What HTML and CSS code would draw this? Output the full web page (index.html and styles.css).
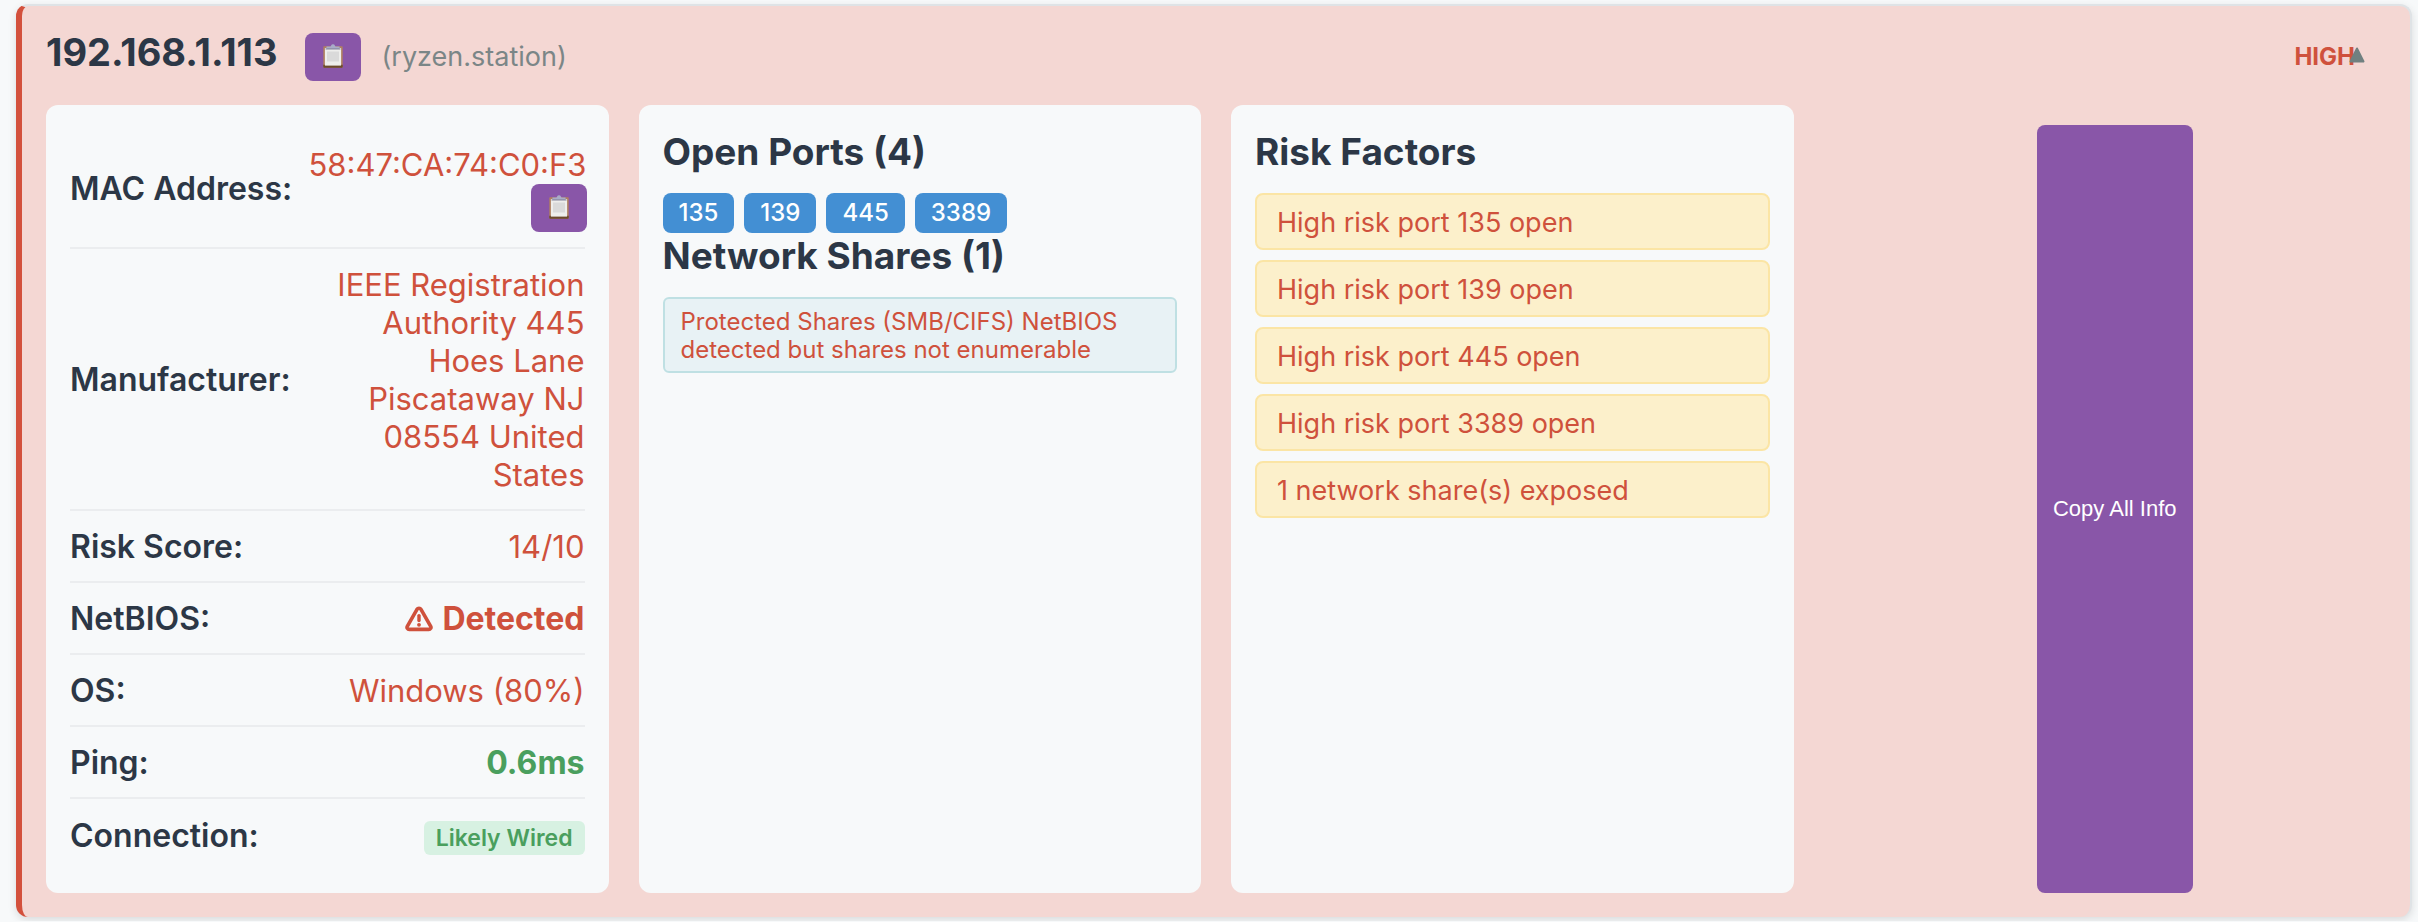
FILE: index.html
```html
<!DOCTYPE html>
<html lang="en">
<head>
<meta charset="utf-8">
<title>192.168.1.113 (ryzen.station)</title>
<link rel="stylesheet" href="styles.css">
</head>
<body>
<svg class="defs" aria-hidden="true">
  <symbol id="clipboard" viewBox="0 0 20 24">
    <rect x="0.3" y="2.2" width="19.4" height="21.6" rx="0.8" fill="#b08060"/>
    <path d="M0.3 20.8h19.4v2.2a.8.8 0 0 1-.8.8H1.1a.8.8 0 0 1-.8-.8z" fill="#6b4a2c"/>
    <rect x="1.9" y="4" width="16.2" height="17.6" fill="#eeeeec"/>
    <rect x="4" y="7.5" width="12" height="10" fill="#dadada"/>
    <path d="M3.4 2.6h3.9c.6 0 .7-2.4 2.7-2.4s2.1 2.4 2.7 2.4h3.9v2.5H3.4z" fill="#a9acc9"/>
    <path d="M2.5 4.4h15v1.1h-15z" fill="#85859a"/>
  </symbol>
</svg>
<main class="host-card">
  <header class="host-header">
    <h2 class="host-ip">192.168.1.113</h2>
    <button class="copy-btn" type="button" aria-label="Copy IP address"><svg class="clip-icon"><use href="#clipboard"/></svg></button>
    <span class="host-name">(ryzen.station)</span>
    <span class="risk-level">HIGH<svg class="caret" viewBox="0 0 16 16" aria-hidden="true"><path d="M8 1.5 14.5 14.5h-13z" fill="#708080" stroke="#708080" stroke-width="2" stroke-linejoin="round"/></svg></span>
  </header>
  <div class="host-grid">
    <section class="panel">
      <dl class="details">
        <div class="row"><dt>MAC Address:</dt><dd class="mac"><span>58:47:CA:74:C0:F3</span><button class="copy-btn" type="button" aria-label="Copy MAC address"><svg class="clip-icon"><use href="#clipboard"/></svg></button></dd></div>
        <div class="row"><dt>Manufacturer:</dt><dd>IEEE Registration Authority 445 Hoes Lane Piscataway NJ 08554 United States</dd></div>
        <div class="row"><dt>Risk Score:</dt><dd>14/10</dd></div>
        <div class="row"><dt>NetBIOS:</dt><dd class="alert"><svg class="warn" viewBox="0 0 28 26" aria-hidden="true"><path d="M12 3.3 2.3 20.3c-.8 1.5.2 3.1 1.9 3.1h19.6c1.7 0 2.7-1.6 1.9-3.1L16 3.3c-.9-1.5-3.1-1.5-4 0z" fill="none" stroke="currentColor" stroke-width="3.6"/><path d="M14 9.6v5" stroke="currentColor" stroke-width="3.4" stroke-linecap="round"/><circle cx="14" cy="18.8" r="1.9" fill="currentColor"/></svg>Detected</dd></div>
        <div class="row"><dt>OS:</dt><dd>Windows (80%)</dd></div>
        <div class="row"><dt>Ping:</dt><dd class="good">0.6ms</dd></div>
        <div class="row"><dt>Connection:</dt><dd><span class="badge">Likely Wired</span></dd></div>
      </dl>
    </section>
    <section class="panel">
      <h3>Open Ports (4)</h3>
      <div class="ports"><span class="port">135</span><span class="port">139</span><span class="port">445</span><span class="port">3389</span></div>
      <h3>Network Shares (1)</h3>
      <p class="share">Protected Shares (SMB/CIFS) NetBIOS detected but shares not enumerable</p>
    </section>
    <section class="panel">
      <h3>Risk Factors</h3>
      <ul class="risks">
        <li>High risk port 135 open</li>
        <li>High risk port 139 open</li>
        <li>High risk port 445 open</li>
        <li>High risk port 3389 open</li>
        <li>1 network share(s) exposed</li>
      </ul>
    </section>
    <button class="copy-all" type="button">Copy All Info</button>
  </div>
</main>
</body>
</html>
```
FILE: styles.css
```css
* { box-sizing: border-box; }
body {
  margin: 0;
  padding: 4px 6px 4px 16px;
  background: #f7f9fa;
  color: #cf513c;
  font-family: Inter, "Liberation Sans", sans-serif;
  font-size: 31px;
  line-height: 38px;
}
h2, h3, dl, dd, ul, p { margin: 0; padding: 0; }
button { border: 0; font: inherit; cursor: pointer; }
.defs { position: absolute; width: 0; height: 0; }

.host-card {
  padding: 24px;
  background: #f4d7d3;
  border: 2px solid #dfe3e6;
  border-left: 6px solid #d3503c;
  border-bottom-width: 0;
  border-radius: 12px;
  box-shadow: 0 3px 8px rgba(0, 0, 0, 0.12);
}
.host-header {
  display: flex;
  align-items: center;
  padding-right: 31px;
  margin-bottom: 24px;
}
.host-ip {
  color: #2c3746;
  font-size: 38px;
  font-weight: 700;
  line-height: 44px;
  padding-bottom: 7px;
}
.copy-btn {
  display: inline-flex;
  align-items: center;
  justify-content: center;
  width: 56px;
  height: 48px;
  padding: 0 0 2px;
  background: #8956a8;
  border-radius: 8px;
}
.clip-icon { width: 20px; height: 24px; }
.host-header .copy-btn { margin: 3px 20px 0 28px; }
.host-name { padding-top: 2px; color: #7b8687; font-size: 27px; }
.risk-level {
  position: relative;
  padding-top: 2px;
  margin-left: auto;
  font-size: 24px;
  font-weight: 700;
}
.caret {
  position: absolute;
  right: -10px;
  top: 11px;
  width: 16px;
  height: 16px;
}

.host-grid {
  display: grid;
  grid-template-columns: repeat(4, minmax(0, 1fr));
  gap: 30px;
}
.panel {
  padding: 24px;
  background: #f7f9fa;
  border-radius: 12px;
}
.row {
  display: flex;
  align-items: center;
  justify-content: space-between;
  padding: 17px 0 15px;
  border-bottom: 2px solid #ebedef;
}
.row:last-child { padding-bottom: 14px; border-bottom: 0; }
dt { color: #2c3746; font-size: 32px; font-weight: 600; white-space: nowrap; }
dd { max-width: 54%; text-align: right; }
.mac {
  display: flex;
  flex-direction: column;
  align-items: flex-end;
  margin-right: -2px;
  white-space: nowrap;
}
.alert, .good { font-size: 32px; font-weight: 700; }
.good { color: #4a9f5e; }
.warn { width: 28px; height: 26px; margin-right: 9px; vertical-align: -2px; }
.badge {
  display: inline-block;
  padding: 0 12px;
  background: #d7f1e2;
  color: #4a9f5e;
  border-radius: 6px;
  font-size: 23px;
  font-weight: 600;
  line-height: 34px;
}

h3 {
  margin-bottom: 18px;
  color: #2c3746;
  font-size: 37px;
  font-weight: 700;
  line-height: 46px;
}
.ports { display: flex; gap: 10px; }
.port {
  padding: 0 16px;
  background: #438fd3;
  color: #fff;
  border-radius: 8px;
  font-size: 24px;
  font-weight: 500;
  line-height: 40px;
}
.share {
  padding: 9px 16px 7px;
  background: #e8f2f5;
  border: 2px solid #bfe0e3;
  border-radius: 6px;
  font-size: 24px;
  line-height: 28px;
}
.risks { display: grid; gap: 10px; list-style: none; }
.risks li {
  padding: 9px 20px 7px;
  background: #fcf0cb;
  border: 2px solid #fbe5a5;
  border-radius: 8px;
  font-size: 27px;
  line-height: 37px;
}
.copy-all {
  justify-self: center;
  margin: 20px 0 0 20px;
  padding: 0 16px;
  background: #8956a8;
  color: #fff;
  border-radius: 8px;
  font-family: "Liberation Sans", Arial, sans-serif;
  font-size: 22px;
}
```
